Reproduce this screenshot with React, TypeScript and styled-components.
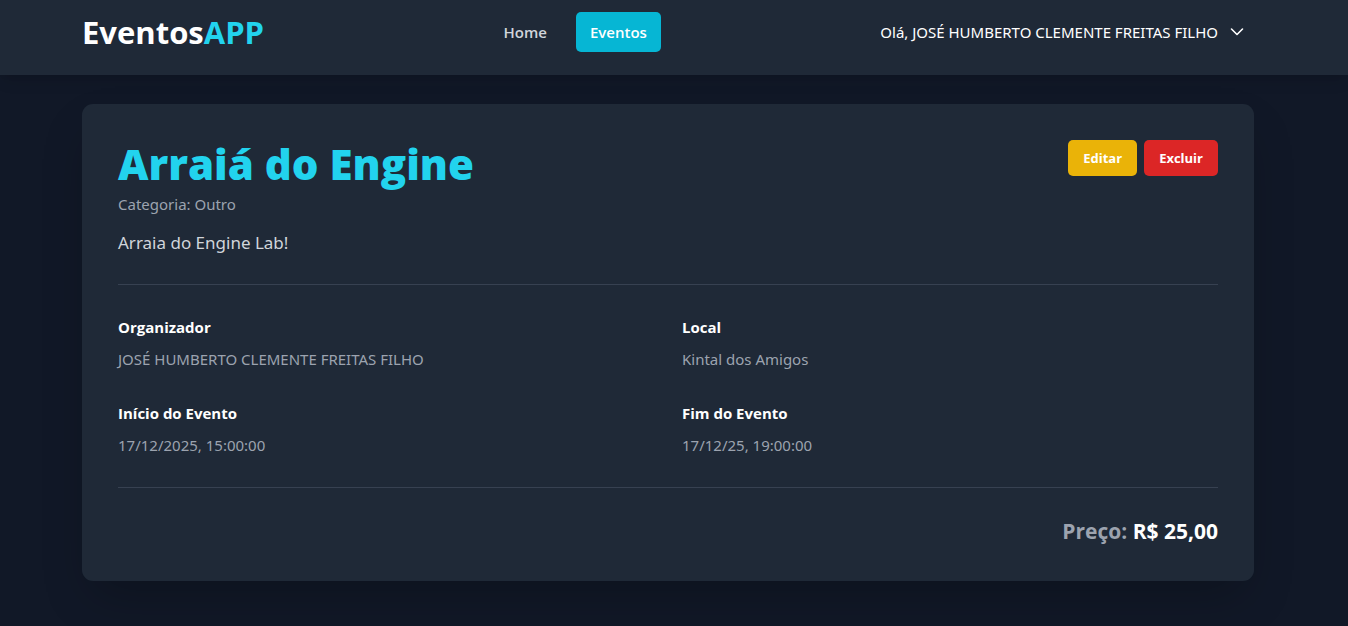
import React from "react";
import styled, { createGlobalStyle } from "styled-components";

const GlobalStyle = createGlobalStyle`
  *, *::before, *::after { box-sizing: border-box; }
  body {
    margin: 0;
    background: #111827;
    color: #ffffff;
    font-family: "Noto Sans", "Open Sans", sans-serif;
    font-size: 15px;
    line-height: 24px;
  }
  h1, h2, p, dl, dd { margin: 0; }
  a { color: inherit; text-decoration: none; }
  button { border: 0; font: inherit; color: inherit; cursor: pointer; }
`;

const Page = styled.div`
  min-height: 100vh;
`;

const Header = styled.header`
  padding: 12px 94px 23px 82px;
  background: #1f2937;
  box-shadow: 0 9px 14px -3px rgba(0, 0, 0, 0.1), 0 4px 6px -4px rgba(0, 0, 0, 0.1);
`;

const HeaderInner = styled.div`
  display: flex;
  justify-content: space-between;
  align-items: center;
  max-width: 1172px;
  margin: 0 auto;
`;

const Logo = styled.a`
  font-family: "Open Sans", "Noto Sans", sans-serif;
  font-size: 31px;
  line-height: 40px;
  font-weight: 700;
`;

const LogoAccent = styled.span`
  color: #22d3ee;
`;

const Nav = styled.nav`
  display: flex;
  gap: 15px;
  padding-left: 16px;
`;

const NavLink = styled.a<{ $active?: boolean }>`
  padding: 8px 14px;
  border-radius: 5px;
  font-family: "Open Sans", "Noto Sans", sans-serif;
  font-weight: 600;
  color: ${({ $active }) => ($active ? "#ffffff" : "#d1d5db")};
  background: ${({ $active }) => ($active ? "#06b6d4" : "transparent")};
`;

const UserMenu = styled.button`
  display: flex;
  align-items: center;
  gap: 12px;
  padding: 8px 10px;
  background: transparent;
`;

const Main = styled.main`
  padding: 29px 94px 45px 82px;
`;

const Card = styled.article`
  max-width: 1172px;
  margin: 0 auto;
  padding: 36px 36px 34px;
  border-radius: 11px;
  background: #1f2937;
  box-shadow: 0 22px 45px -11px rgba(0, 0, 0, 0.25);
`;

const CardHeader = styled.div`
  display: flex;
  justify-content: space-between;
  align-items: flex-start;
  padding-bottom: 28px;
  border-bottom: 1px solid #374151;
`;

const Title = styled.h1`
  font-family: "Open Sans", "Noto Sans", sans-serif;
  font-size: 42px;
  line-height: 48px;
  font-weight: 800;
  color: #22d3ee;
`;

const Category = styled.p`
  margin-top: 4px;
  color: #9ca3af;
`;

const Description = styled.p`
  margin-top: 14px;
  font-size: 17px;
  line-height: 26px;
  color: #d1d5db;
`;

const Actions = styled.div`
  display: flex;
  gap: 7px;
`;

const ActionButton = styled.button<{ $color: string }>`
  padding: 8px 15px;
  border-radius: 5px;
  font-family: "Open Sans", "Noto Sans", sans-serif;
  font-size: 13px;
  line-height: 20px;
  font-weight: 700;
  background: ${({ $color }) => $color};
`;

const Details = styled.dl`
  display: grid;
  grid-template-columns: 1fr 1fr;
  gap: 30px 28px;
  padding: 30px 0;
  border-bottom: 1px solid #374151;
`;

const Label = styled.dt`
  font-family: "Open Sans", "Noto Sans", sans-serif;
  font-weight: 700;
`;

const Value = styled.dd`
  margin-top: 8px;
  color: #9ca3af;
`;

const Price = styled.p`
  padding-top: 27px;
  text-align: right;
  font-family: "Open Sans", "Noto Sans", sans-serif;
  font-size: 21px;
  line-height: 32px;
  font-weight: 700;
`;

const PriceLabel = styled.span`
  color: #9ca3af;
`;

const details = [
  { label: "Organizador", value: "JOSÉ HUMBERTO CLEMENTE FREITAS FILHO" },
  { label: "Local", value: "Kintal dos Amigos" },
  { label: "Início do Evento", value: "17/12/2025, 15:00:00" },
  { label: "Fim do Evento", value: "17/12/25, 19:00:00" },
];

export default function App() {
  return (
    <Page>
      <GlobalStyle />
      <Header>
        <HeaderInner>
          <Logo href="#">
            Eventos<LogoAccent>APP</LogoAccent>
          </Logo>
          <Nav>
            <NavLink href="#">Home</NavLink>
            <NavLink href="#" $active>Eventos</NavLink>
          </Nav>
          <UserMenu type="button">
            Olá, JOSÉ HUMBERTO CLEMENTE FREITAS FILHO
            <svg width="14" height="14" viewBox="0 0 14 14" fill="none" stroke="currentColor" strokeWidth="1.6" strokeLinecap="round" strokeLinejoin="round" aria-hidden="true">
              <path d="M1.5 4 7 9.5 12.5 4" />
            </svg>
          </UserMenu>
        </HeaderInner>
      </Header>
      <Main>
        <Card>
          <CardHeader>
            <div>
              <Title>Arraiá do Engine</Title>
              <Category>Categoria: Outro</Category>
              <Description>Arraia do Engine Lab!</Description>
            </div>
            <Actions>
              <ActionButton type="button" $color="#eab308">Editar</ActionButton>
              <ActionButton type="button" $color="#dc2626">Excluir</ActionButton>
            </Actions>
          </CardHeader>
          <Details>
            {details.map(({ label, value }) => (
              <div key={label}>
                <Label>{label}</Label>
                <Value>{value}</Value>
              </div>
            ))}
          </Details>
          <Price>
            <PriceLabel>Preço:</PriceLabel> R$ 25,00
          </Price>
        </Card>
      </Main>
    </Page>
  );
}
